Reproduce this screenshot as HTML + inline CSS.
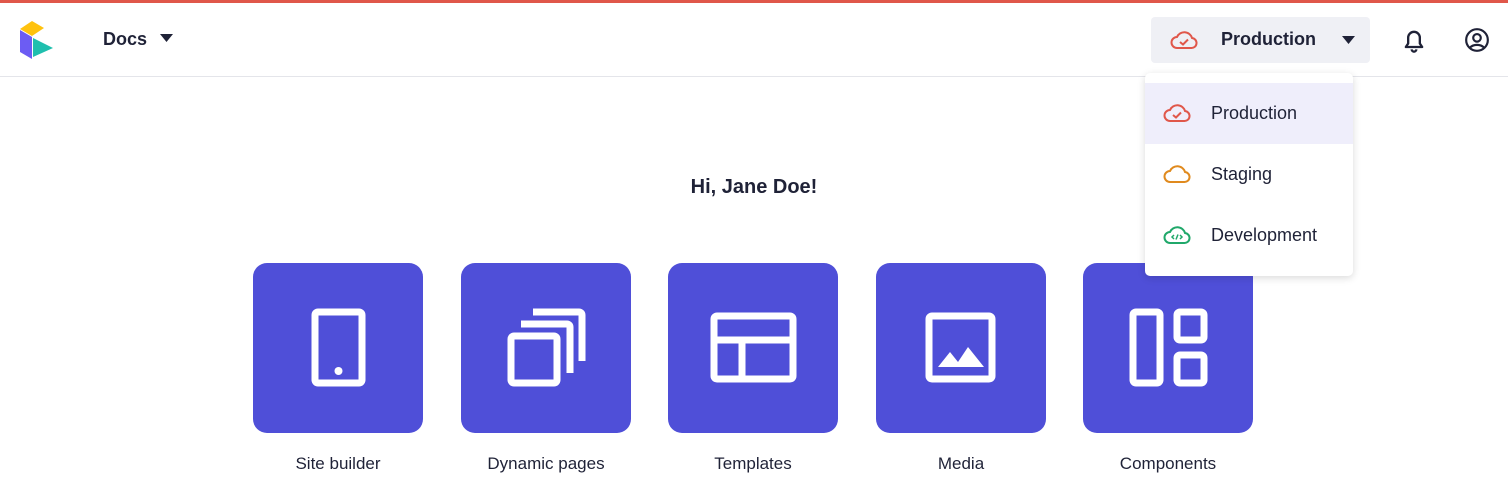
<!DOCTYPE html>
<html><head><meta charset="utf-8"><style>
*{margin:0;padding:0;box-sizing:border-box}
body{width:1508px;height:501px;background:#fff;font-family:"Liberation Sans",sans-serif;color:#1f2237;position:relative;overflow:hidden}
.abs{position:absolute}
.top{left:0;top:0;width:1508px;height:3px;background:#e0574a}
.hdr{left:0;top:76px;width:1508px;height:1px;background:#e4e5ea}
.tile{position:absolute;top:263px;width:170px;height:170px;background:#4f4fd8;border-radius:14px}
.lbl{position:absolute;top:454px;width:220px;text-align:center;font-size:17px;color:#1f2237}
.menu{left:1145px;top:73px;width:208px;height:203px;background:#fff;border-radius:5px;box-shadow:0 2px 8px rgba(0,0,0,.15);z-index:10}
.item{position:absolute;left:0;width:208px;height:61px;font-size:18px;line-height:61px;padding-left:66px;color:#1f2237}
</style></head><body>
<div class="abs top"></div>
<div class="abs hdr"></div>
<svg class="abs" style="left:19px;top:20px" width="36" height="40" viewBox="0 0 36 40">
<polygon points="1,9 13,1 25,8 13,16" fill="#ffc20e"/>
<polygon points="1,10 13,17 13,39 1,32" fill="#6c5cf3"/>
<polygon points="14,18 34,28 14,37" fill="#1fbfae"/>
</svg>
<div class="abs" style="left:103px;top:29px;font-size:18px;font-weight:bold">Docs</div>
<svg class="abs" style="left:160px;top:34px" width="13" height="9"><polygon points="0,0 13,0 6.5,8" fill="#1f2237"/></svg>

<div class="abs" style="left:1151px;top:17px;width:219px;height:46px;background:#eff0f5;border-radius:4px"></div>
<svg class="abs" style="left:1170px;top:30px" width="28" height="20" viewBox="0 0 28 20"><path d="M7,18 H21 A5,5 0 0 0 22,8 A8,8 0 0 0 7,7 A5.5,5.5 0 0 0 7,18Z" fill="none" stroke="#e0574a" stroke-width="2"/><path d="M10,12 l3,2.5 l5,-5" fill="none" stroke="#e0574a" stroke-width="2"/></svg>
<div class="abs" style="left:1221px;top:29px;font-size:18px;font-weight:bold">Production</div>
<svg class="abs" style="left:1342px;top:36px" width="13" height="9"><polygon points="0,0 13,0 6.5,8" fill="#1f2237"/></svg>
<svg class="abs" style="left:1400px;top:26px" width="28" height="28" viewBox="0 0 24 24"><path d="M5,18 h14 l-2,-3 v-5 a5,5 0 0 0 -10,0 v5 z" fill="none" stroke="#1f2237" stroke-width="2" stroke-linejoin="round"/><path d="M10,20 a2,2 0 0 0 4,0" fill="none" stroke="#1f2237" stroke-width="2"/></svg>
<svg class="abs" style="left:1464px;top:27px" width="26" height="26" viewBox="0 0 24 24"><circle cx="12" cy="12" r="10" fill="none" stroke="#1f2237" stroke-width="2"/><circle cx="12" cy="10" r="3.5" fill="none" stroke="#1f2237" stroke-width="2"/><path d="M5.5,19 a8,6 0 0 1 13,0" fill="none" stroke="#1f2237" stroke-width="2"/></svg>

<div class="abs" style="left:0;top:176px;width:1508px;text-align:center;font-size:20px;font-weight:bold">Hi, Jane Doe!</div>

<div class="tile" style="left:253px"></div>
<div class="tile" style="left:461px"></div>
<div class="tile" style="left:668px"></div>
<div class="tile" style="left:876px"></div>
<div class="tile" style="left:1083px"></div>
<svg class="abs" style="left:0;top:0" width="1508" height="501">
<g fill="none" stroke="#fff" stroke-width="7" stroke-linejoin="round">
<rect x="315" y="312" width="47" height="71" rx="3"/>
<rect x="511" y="336" width="46" height="47" rx="3"/>
<path d="M521,324 h46 a3,3 0 0 1 3,3 v46"/>
<path d="M533,312 h46 a3,3 0 0 1 3,3 v46"/>
<rect x="714" y="316" width="79" height="63" rx="3"/>
<path d="M714,340 h79 M742,340 v39"/>
<rect x="929" y="316" width="63" height="63" rx="3"/>
<rect x="1133" y="312" width="27" height="71" rx="3"/>
<rect x="1177" y="312" width="27" height="28" rx="3"/>
<rect x="1177" y="355" width="27" height="28" rx="3"/>
</g>
<circle cx="338.5" cy="371" r="4" fill="#fff"/>
<polygon points="938,367 950,352 958,362 968,347 984,367" fill="#fff"/>
</svg>
<div class="lbl" style="left:228px">Site builder</div>
<div class="lbl" style="left:436px">Dynamic pages</div>
<div class="lbl" style="left:643px">Templates</div>
<div class="lbl" style="left:851px">Media</div>
<div class="lbl" style="left:1058px">Components</div>

<div class="abs menu">
<div class="item" style="top:10px;background:#efeefb">Production</div>
<div class="item" style="top:71px">Staging</div>
<div class="item" style="top:132px">Development</div>
<svg class="abs" style="left:18px;top:30px" width="28" height="20" viewBox="0 0 28 20"><path d="M7,18 H21 A5,5 0 0 0 22,8 A8,8 0 0 0 7,7 A5.5,5.5 0 0 0 7,18Z" fill="none" stroke="#e0574a" stroke-width="2"/><path d="M10,12 l3,2.5 l5,-5" fill="none" stroke="#e0574a" stroke-width="2"/></svg>
<svg class="abs" style="left:18px;top:91px" width="28" height="20" viewBox="0 0 28 20"><path d="M7,18 H21 A5,5 0 0 0 22,8 A8,8 0 0 0 7,7 A5.5,5.5 0 0 0 7,18Z" fill="none" stroke="#e08a1e" stroke-width="2"/></svg>
<svg class="abs" style="left:18px;top:152px" width="28" height="20" viewBox="0 0 28 20"><path d="M7,18 H21 A5,5 0 0 0 22,8 A8,8 0 0 0 7,7 A5.5,5.5 0 0 0 7,18Z" fill="none" stroke="#20a86a" stroke-width="2"/><path d="M11,10 l-2,2 l2,2 M17,10 l2,2 l-2,2 M15,9.5 l-2,5" fill="none" stroke="#20a86a" stroke-width="1.5"/></svg>
</div>
</body></html>
